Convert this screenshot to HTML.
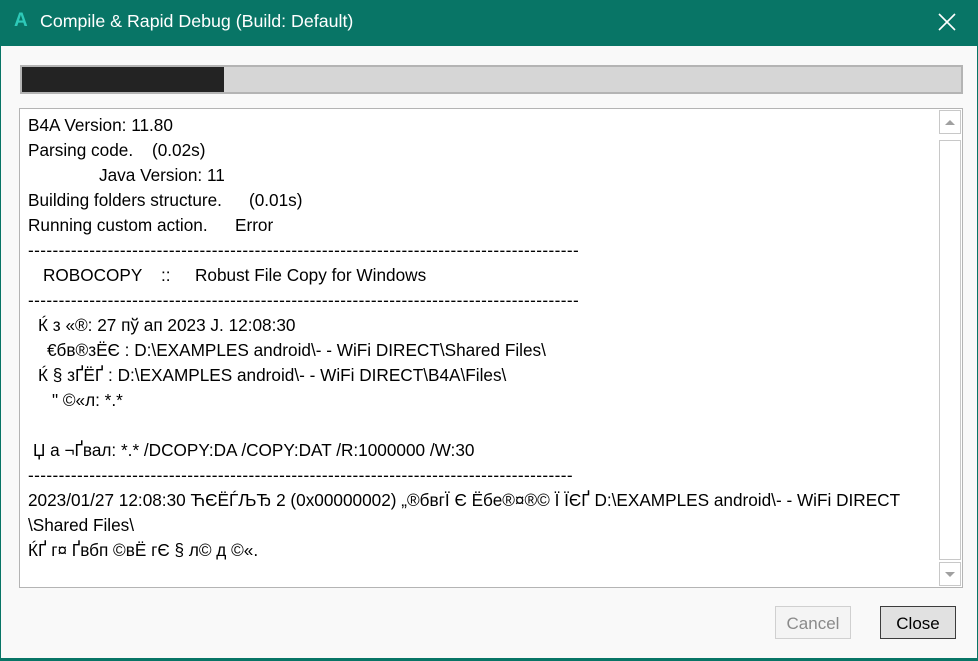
<!DOCTYPE html>
<html><head><meta charset="utf-8"><style>
*{margin:0;padding:0;box-sizing:border-box}
body{width:978px;height:661px;overflow:hidden;background:#087566;font-family:"Liberation Sans","DejaVu Sans",sans-serif;position:relative}
.title{position:absolute;left:0;top:0;width:978px;height:46px;background:#087566;color:#fff}
.title .t{position:absolute;left:40px;top:11px;font-size:17.8px}
.title .a{position:absolute;left:14px;top:10px;font-size:19px;font-weight:bold;color:#2ec9b8}
.body{position:absolute;left:1px;top:46px;width:976px;height:612px;background:#f9f9f9}
.pb{position:absolute;left:19px;top:19px;width:943px;height:29px;border:2px solid #b4b4b4;background:#d6d6d6}
.pb div{position:absolute;left:0;top:0;width:202px;height:25px;background:#232323}
.tb{position:absolute;left:18px;top:62px;width:944px;height:480px;border:1px solid #b4b4b4;background:#fff}
.sb{position:absolute;left:917px;top:0;width:25px;height:478px;background:#fff}
.btnS{position:absolute;left:2px;width:22px;border:1px solid #c8c8c8;background:#fff}
.l{position:absolute;font-size:17.2px;line-height:22px;color:#000;white-space:nowrap;margin-top:3px}
.d{overflow:hidden;height:22px;letter-spacing:0.4px}
.btn{position:absolute;top:560px;height:33px;font-size:17px;text-align:center;line-height:34px}
</style></head><body>
<div class="title"><span class="a">A</span><span class="t">Compile &amp; Rapid Debug (Build: Default)</span>
<svg style="position:absolute;left:936px;top:11px" width="22" height="22" viewBox="0 0 22 22"><path d="M3 3L19 19M19 3L3 19" stroke="#fff" stroke-width="1.6"/></svg></div>
<div class="body">
<div class="pb"><div></div></div>
<div class="tb">
<div class="l" style="left:8px;top:2px">B4A Version: 11.80</div>
<div class="l" style="left:8px;top:27px">Parsing code.</div><div class="l" style="left:132px;top:27px">(0.02s)</div>
<div class="l" style="left:79px;top:52px">Java Version: 11</div>
<div class="l" style="left:8px;top:77px">Building folders structure.</div><div class="l" style="left:229px;top:77px">(0.01s)</div>
<div class="l" style="left:8px;top:102px">Running custom action.</div><div class="l" style="left:215px;top:102px">Error</div>
<div class="l d" style="left:8px;top:127px;width:551px">------------------------------------------------------------------------------------------------------------------------------</div>
<div class="l" style="left:23px;top:152px">ROBOCOPY</div><div class="l" style="left:141px;top:152px">::</div><div class="l" style="left:175px;top:152px">Robust File Copy for Windows</div>
<div class="l d" style="left:8px;top:177px;width:551px">------------------------------------------------------------------------------------------------------------------------------</div>
<div class="l" style="left:18px;top:202px">Ќ з «®: 27 пў ап 2023 Ј. 12:08:30</div>
<div class="l" style="left:27px;top:227px">€бв®зЁЄ : D:\EXAMPLES android\- - WiFi DIRECT\Shared Files\</div>
<div class="l" style="left:18px;top:252px">Ќ § зҐЁҐ : D:\EXAMPLES android\- - WiFi DIRECT\B4A\Files\</div>
<div class="l" style="left:32px;top:277px">" ©«л: *.*</div>
<div class="l" style="left:13px;top:327px">Џ а ¬Ґвал: *.* /DCOPY:DA /COPY:DAT /R:1000000 /W:30</div>
<div class="l d" style="left:8px;top:352px;width:545px">------------------------------------------------------------------------------------------------------------------------------</div>
<div class="l" style="left:8px;top:377px">2023/01/27 12:08:30 ЋЄЁЃЉЂ 2 (0x00000002) „®бвгЇ Є Ёбе®¤®© Ї ЇЄҐ D:\EXAMPLES android\- - WiFi DIRECT</div>
<div class="l" style="left:8px;top:402px">\Shared Files\</div>
<div class="l" style="left:8px;top:427px">ЌҐ г¤ Ґвбп  ©вЁ гЄ § л© д ©«.</div>
<div class="sb">
<div class="btnS" style="top:1px;height:24px"><svg width="20" height="22"><path d="M5 14L10 9L15 14Z" fill="#a0a0a0"/></svg></div>
<div class="btnS" style="top:31px;height:420px"></div>
<div class="btnS" style="top:453px;height:24px"><svg width="20" height="22"><path d="M5 9L15 9L10 14Z" fill="#a0a0a0"/></svg></div>
</div>
</div>
<div class="btn" style="left:774px;width:76px;border:1px solid #d0d0d0;background:#f4f4f4;color:#8a8a8a">Cancel</div>
<div class="btn" style="left:879px;width:76px;border:1px solid #3c3c3c;background:#e1e1e1;color:#000">Close</div>
</div>
</body></html>
